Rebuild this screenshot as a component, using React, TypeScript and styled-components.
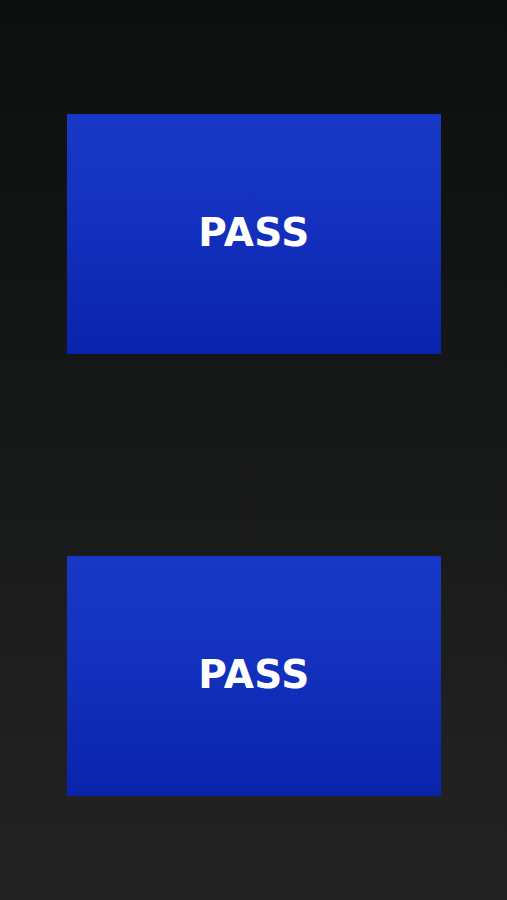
import styled, { createGlobalStyle } from 'styled-components';

const GlobalStyle = createGlobalStyle`
  html, body {
    margin: 0;
    padding: 0;
    background: #111;
  }
`;

const Screen = styled.div`
  min-height: 900px;
  box-sizing: border-box;
  padding-top: 114px;
  display: flex;
  flex-direction: column;
  align-items: center;
  gap: 202px;
  background: linear-gradient(180deg, #0d0e0e 0%, #171918 50%, #232323 100%);
`;

const PassCard = styled.button`
  width: 374px;
  height: 240px;
  border: none;
  padding: 0;
  margin-left: 1px;
  display: flex;
  align-items: center;
  justify-content: center;
  background: linear-gradient(180deg, #1738c6 0%, #1331be 45%, #0a23ac 100%);
  color: #ffffff;
  font-family: 'DejaVu Sans', 'Liberation Sans', sans-serif;
  font-weight: bold;
  font-size: 39px;
  letter-spacing: 0.5px;
  cursor: pointer;
`;

const Label = styled.span`
  display: block;
  margin-top: -3px;
`;

const cards = ['PASS', 'PASS'];

const App = () => {
  return (
    <>
      <GlobalStyle />
      <Screen>
        {cards.map((label, i) => (
          <PassCard key={i}>
            <Label>{label}</Label>
          </PassCard>
        ))}
      </Screen>
    </>
  );
};

export default App;
